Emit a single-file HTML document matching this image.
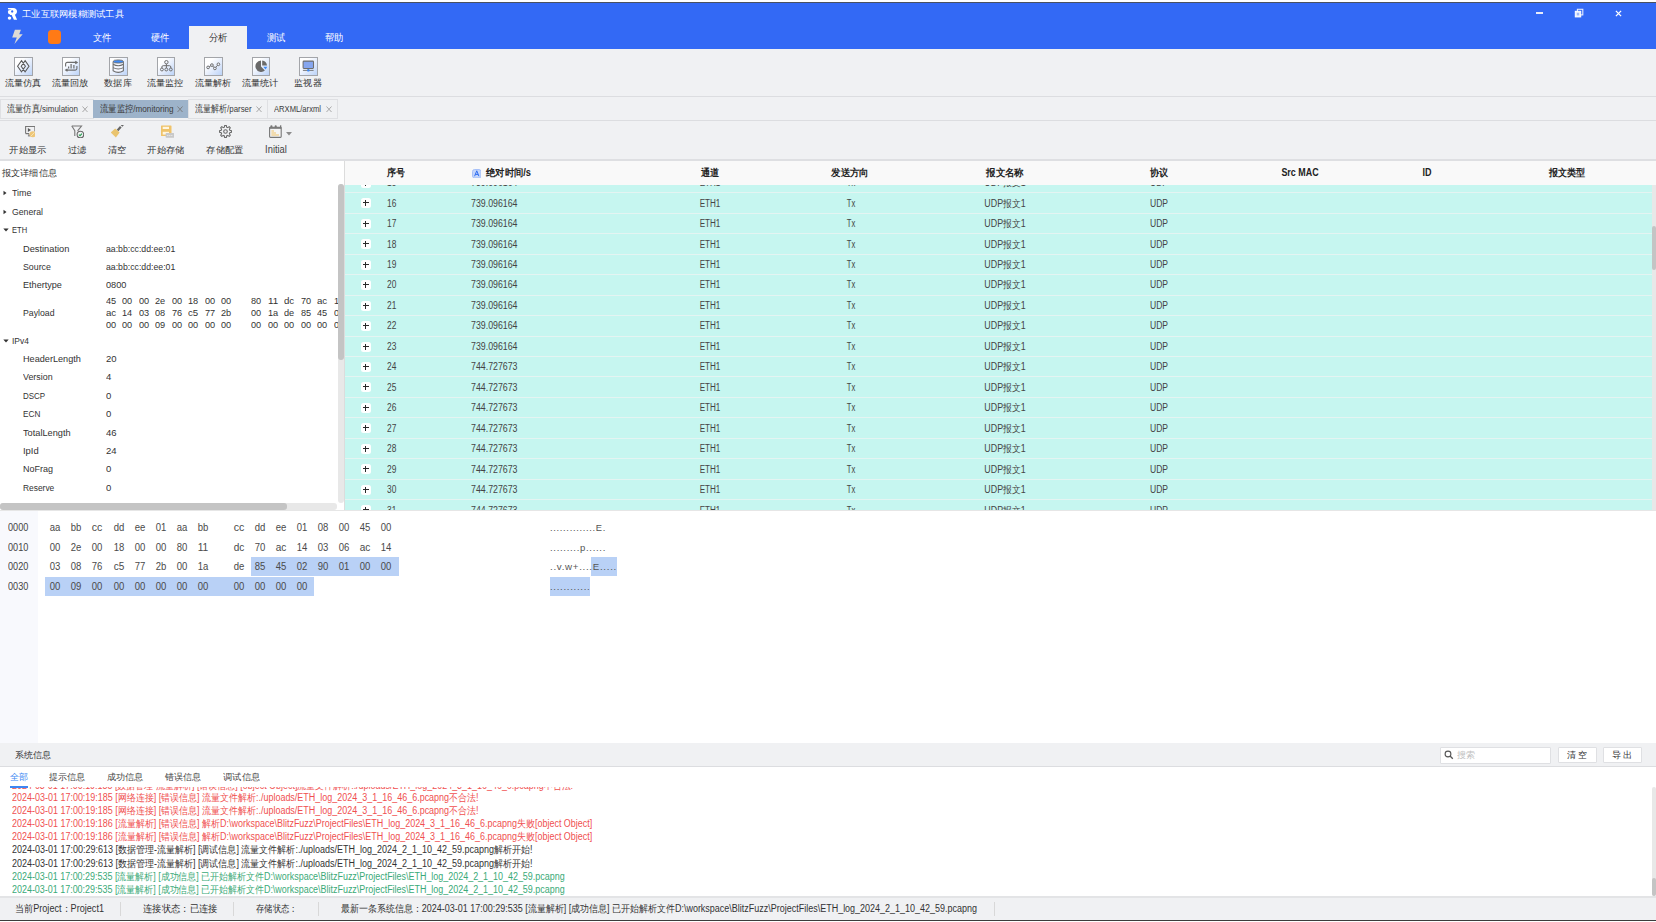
<!DOCTYPE html>
<html><head><meta charset="utf-8">
<style>
*{box-sizing:border-box;margin:0;padding:0}
html,body{width:1656px;height:922px;overflow:hidden;background:#fff;font-family:"Liberation Sans",sans-serif;font-size:9px;color:#333}
.a{position:absolute}
.t{position:absolute;white-space:nowrap}
.c{transform:translateX(-50%)}
</style></head><body>

<div class="a" style="left:0px;top:2px;width:1656px;height:1px;background:#4a5160;"></div>
<div class="a" style="left:0px;top:3px;width:1656px;height:46px;background:#3369f5;"></div>
<svg class="a" style="left:0px;top:0px" width="24" height="24" viewBox="0 0 24 24"><path d="M7.8 7.9 H13.2 C15.6 7.9 17 9.4 17 11.4 C17 13 16.1 14.2 14.9 14.7 L17.1 19.8 H13.9 L11.6 15.1 H10.2 Z" fill="#fff"/><circle cx="10.2" cy="12.1" r="2.35" fill="#fff"/><ellipse cx="12.2" cy="11.4" rx="1.05" ry="1.2" fill="#3369f5"/><path d="M7.8 9.4 H11.6 L8.4 10.6 Z" fill="#3369f5"/><ellipse cx="9.5" cy="18.1" rx="1.75" ry="1.7" fill="#fff"/></svg>
<div class="t" style="left:22px;top:8.00px;font-size:9.3px;line-height:12px;color:#fff;transform:scaleX(1.0303);transform-origin:0 50%;">工业互联网模糊测试工具</div>
<div class="a" style="left:1536px;top:12.2px;width:6.5px;height:1.6px;background:#e8ecfb;"></div>
<svg class="a" style="left:1574px;top:8px" width="10" height="10" viewBox="0 0 10 10"><rect x="3.4" y="1.3" width="5.4" height="5.6" fill="none" stroke="#e6ecfc" stroke-width="1.1"/><rect x="1.3" y="3.3" width="5.4" height="5.6" fill="#eef2fd" stroke="#ffffff" stroke-width="1"/><rect x="2.8" y="4.8" width="2.4" height="2.6" fill="#9fb8f8"/></svg>
<svg class="a" style="left:1615px;top:9.5px" width="7" height="7" viewBox="0 0 7 7"><path d="M0.9 0.9 L6.1 6.1 M6.1 0.9 L0.9 6.1" stroke="#fff" stroke-width="1.3"/></svg>
<svg class="a" style="left:0px;top:0px" width="30" height="50" viewBox="0 0 30 50"><path d="M14.9 29.8 H20.9 L19.2 34.3 H22.7 L14.4 43.9 L16.8 37.6 H12.2 Z" fill="#dedbd5"/></svg>
<div class="a" style="left:47.8px;top:30px;width:13.3px;height:13.8px;background:#ff7a16;border-radius:3.5px"></div>
<div class="a" style="left:189px;top:26px;width:58px;height:23px;background:#f0f1f3;"></div>
<div class="t c" style="left:102px;top:32.00px;font-size:9.5px;line-height:12px;color:#fff;transform:translateX(-50%) scaleX(0.9300);transform-origin:50% 50%;">文件</div>
<div class="t c" style="left:160px;top:32.00px;font-size:9.5px;line-height:12px;color:#fff;transform:translateX(-50%) scaleX(0.9300);transform-origin:50% 50%;">硬件</div>
<div class="t c" style="left:218px;top:32.00px;font-size:9.5px;line-height:12px;color:#333;transform:translateX(-50%) scaleX(0.9300);transform-origin:50% 50%;">分析</div>
<div class="t c" style="left:276px;top:32.00px;font-size:9.5px;line-height:12px;color:#fff;transform:translateX(-50%) scaleX(0.9300);transform-origin:50% 50%;">测试</div>
<div class="t c" style="left:334px;top:32.00px;font-size:9.5px;line-height:12px;color:#fff;transform:translateX(-50%) scaleX(0.9300);transform-origin:50% 50%;">帮助</div>
<div class="a" style="left:0px;top:49px;width:1656px;height:111px;background:#f0f1f3;"></div>
<div class="a" style="left:0px;top:96px;width:1656px;height:1px;background:#dcdde0;"></div>
<div class="a" style="left:0px;top:120px;width:1656px;height:1px;background:#dcdde0;"></div>
<div class="a" style="left:0px;top:159.3px;width:1656px;height:1.6px;background:#dedfe2;"></div>
<div class="a" style="left:14.1px;top:57.1px;width:18.6px;height:18.6px;border:1px solid #a3a5a9;background:linear-gradient(135deg,#ffffff 25%,#e6eefc 55%,#bcd3f8)"></div>
<svg class="a" style="left:14.1px;top:57.1px" width="18.5" height="18.5" viewBox="0 0 18.5 18.5"><path d="M7.5 3.6 L11.4 9.25 L7.5 14.9 L3.6 9.25Z M11.1 3.6 L15 9.25 L11.1 14.9 L7.2 9.25Z" fill="none" stroke="#5a5a5a" stroke-width="1.05" stroke-linejoin="miter"/></svg>
<div class="t c" style="left:22.65px;top:77.00px;font-size:9.3px;line-height:12px;color:#333;transform:translateX(-50%) scaleX(1.0194);transform-origin:50% 50%;">流量仿真</div>
<div class="a" style="left:61.6px;top:57.1px;width:18.6px;height:18.6px;border:1px solid #a3a5a9;background:linear-gradient(135deg,#ffffff 25%,#e6eefc 55%,#bcd3f8)"></div>
<svg class="a" style="left:61.6px;top:57.1px" width="18.5" height="18.5" viewBox="0 0 18.5 18.5"><path d="M3.6 9.6 V7 Q3.6 5.4 5.2 5.4 H14.6 M13.3 4.2 L15.2 5.45 L13.3 6.7 M14.9 8.9 V11.5 Q14.9 13.1 13.3 13.1 H4.2 M5.5 11.9 L3.6 13.1 L5.5 14.3" fill="none" stroke="#6e6e6e" stroke-width="1.1"/><path d="M6.6 11.4 V9.4 M9.1 11.6 V6.9 M11.9 11.6 V7.9" stroke="#6e6e6e" stroke-width="1.2"/></svg>
<div class="t c" style="left:70.05px;top:77.00px;font-size:9.3px;line-height:12px;color:#333;transform:translateX(-50%) scaleX(1.0194);transform-origin:50% 50%;">流量回放</div>
<div class="a" style="left:109.1px;top:57.1px;width:18.6px;height:18.6px;border:1px solid #a3a5a9;background:linear-gradient(135deg,#ffffff 25%,#e6eefc 55%,#bcd3f8)"></div>
<svg class="a" style="left:109.1px;top:57.1px" width="18.5" height="18.5" viewBox="0 0 18.5 18.5"><path d="M4.1 4.5 V13.8 Q9.25 17 14.4 13.8 V4.5" fill="#f4f7ff" stroke="#6e6e6e" stroke-width="1.05"/><path d="M4.1 7.3 Q9.25 10.3 14.4 7.3 M4.1 10.6 Q9.25 13.4 14.4 10.6" fill="none" stroke="#6e6e6e" stroke-width="1.05"/><ellipse cx="9.25" cy="4.5" rx="5.15" ry="1.6" fill="#3d8af7" stroke="#6e6e6e" stroke-width="0.9"/></svg>
<div class="t c" style="left:117.65px;top:77.00px;font-size:9.3px;line-height:12px;color:#333;transform:translateX(-50%) scaleX(1.0185);transform-origin:50% 50%;">数据库</div>
<div class="a" style="left:156.5px;top:57.1px;width:18.6px;height:18.6px;border:1px solid #a3a5a9;background:linear-gradient(135deg,#ffffff 25%,#e6eefc 55%,#bcd3f8)"></div>
<svg class="a" style="left:156.5px;top:57.1px" width="18.5" height="18.5" viewBox="0 0 18.5 18.5"><circle cx="9.4" cy="5.2" r="1.7" fill="none" stroke="#6e6e6e" stroke-width="1"/><path d="M9.4 6.9 V11 M4.9 11 V10 Q4.9 8.7 6.2 8.7 H12.5 Q13.8 8.7 13.8 10 V11" fill="none" stroke="#6e6e6e" stroke-width="1"/><circle cx="4.9" cy="12.5" r="1.45" fill="none" stroke="#6e6e6e" stroke-width="1"/><circle cx="9.3" cy="12.5" r="1.45" fill="none" stroke="#6e6e6e" stroke-width="1"/><circle cx="13.8" cy="12.5" r="1.45" fill="none" stroke="#6e6e6e" stroke-width="1"/></svg>
<div class="t c" style="left:165.25px;top:77.00px;font-size:9.3px;line-height:12px;color:#333;transform:translateX(-50%) scaleX(1.0194);transform-origin:50% 50%;">流量监控</div>
<div class="a" style="left:204.1px;top:57.1px;width:18.6px;height:18.6px;border:1px solid #a3a5a9;background:linear-gradient(135deg,#ffffff 25%,#e6eefc 55%,#bcd3f8)"></div>
<svg class="a" style="left:204.1px;top:57.1px" width="18.5" height="18.5" viewBox="0 0 18.5 18.5"><path d="M4.1 10.4 L7.9 8.1 L10.9 11.4 L14.4 7.3" fill="none" stroke="#6e6e6e" stroke-width="0.9"/><circle cx="4.1" cy="10.4" r="1.35" fill="#f0f4fe" stroke="#6e6e6e" stroke-width="1"/><circle cx="7.9" cy="8.1" r="1.35" fill="#f0f4fe" stroke="#6e6e6e" stroke-width="1"/><circle cx="10.9" cy="11.4" r="1.35" fill="#f0f4fe" stroke="#6e6e6e" stroke-width="1"/><circle cx="14.4" cy="7.3" r="1.35" fill="#f0f4fe" stroke="#6e6e6e" stroke-width="1"/></svg>
<div class="t c" style="left:212.85px;top:77.00px;font-size:9.3px;line-height:12px;color:#333;transform:translateX(-50%) scaleX(1.0194);transform-origin:50% 50%;">流量解析</div>
<div class="a" style="left:251.5px;top:57.1px;width:18.6px;height:18.6px;border:1px solid #a3a5a9;background:linear-gradient(135deg,#ffffff 25%,#e6eefc 55%,#bcd3f8)"></div>
<svg class="a" style="left:251.5px;top:57.1px" width="18.5" height="18.5" viewBox="0 0 18.5 18.5"><path d="M9 3.45 A5.75 5.75 0 1 0 12.9 13.6 L9 9.5 Z" fill="#6a6a6a"/><path d="M10.2 3.5 A5.75 5.75 0 0 1 15 8.4 H10.2 Z" fill="#6a6a6a"/><path d="M11.3 9.7 H15.3 L13.6 12.6 Z" fill="#3d8af7"/></svg>
<div class="t c" style="left:260.35px;top:77.00px;font-size:9.3px;line-height:12px;color:#333;transform:translateX(-50%) scaleX(1.0250);transform-origin:50% 50%;">流量统计</div>
<div class="a" style="left:299.1px;top:57.1px;width:18.6px;height:18.6px;border:1px solid #a3a5a9;background:linear-gradient(135deg,#ffffff 25%,#e6eefc 55%,#bcd3f8)"></div>
<svg class="a" style="left:299.1px;top:57.1px" width="18.5" height="18.5" viewBox="0 0 18.5 18.5"><rect x="4.1" y="4.1" width="10.4" height="7.3" rx="0.8" fill="#86a6ef" stroke="#6e6e6e" stroke-width="1.05"/><path d="M9.3 11.4 V13 M3.9 13.4 H14.6" stroke="#6e6e6e" stroke-width="0.9"/><rect x="8.1" y="12.3" width="2.5" height="2.1" rx="0.6" fill="#3d8af7"/></svg>
<div class="t c" style="left:307.65px;top:77.00px;font-size:9.3px;line-height:12px;color:#333;transform:translateX(-50%) scaleX(1.0111);transform-origin:50% 50%;">监视器</div>
<div class="a" style="left:0px;top:99px;width:94px;height:20px;border:1px solid #dfe0e3;background:#f0f1f3"></div>
<div class="t" style="left:6.5px;top:103.30px;font-size:9.8px;line-height:12px;color:#3c3c3c;transform:scaleX(0.8177);transform-origin:0 50%;">流量仿真/simulation</div>
<svg class="a" style="left:82px;top:105.5px" width="6" height="6.5" viewBox="0 0 6 6.5"><path d="M0.5 0.5 L5.5 6 M5.5 0.5 L0.5 6" stroke="#a0a0a0" stroke-width="0.9"/></svg>
<div class="a" style="left:93px;top:100px;width:95px;height:18px;background:#9db3ca;"></div>
<div class="t" style="left:99.5px;top:103.30px;font-size:9.8px;line-height:12px;color:#3c3c3c;transform:scaleX(0.8319);transform-origin:0 50%;">流量监控/monitoring</div>
<svg class="a" style="left:177px;top:105.5px" width="6" height="6.5" viewBox="0 0 6 6.5"><path d="M0.5 0.5 L5.5 6 M5.5 0.5 L0.5 6" stroke="#777" stroke-width="0.9"/></svg>
<div class="a" style="left:188px;top:99px;width:80px;height:20px;border:1px solid #dfe0e3;background:#f0f1f3"></div>
<div class="t" style="left:194.5px;top:103.30px;font-size:9.8px;line-height:12px;color:#3c3c3c;transform:scaleX(0.8028);transform-origin:0 50%;">流量解析/parser</div>
<svg class="a" style="left:256px;top:105.5px" width="6" height="6.5" viewBox="0 0 6 6.5"><path d="M0.5 0.5 L5.5 6 M5.5 0.5 L0.5 6" stroke="#a0a0a0" stroke-width="0.9"/></svg>
<div class="a" style="left:267px;top:99px;width:71px;height:20px;border:1px solid #dfe0e3;background:#f0f1f3"></div>
<div class="t" style="left:273.5px;top:103.30px;font-size:9.8px;line-height:12px;color:#3c3c3c;transform:scaleX(0.7777);transform-origin:0 50%;">ARXML/arxml</div>
<svg class="a" style="left:326px;top:105.5px" width="6" height="6.5" viewBox="0 0 6 6.5"><path d="M0.5 0.5 L5.5 6 M5.5 0.5 L0.5 6" stroke="#a0a0a0" stroke-width="0.9"/></svg>
<svg class="a" style="left:21.5px;top:124.8px" width="13" height="13" viewBox="0 0 13 13"><path d="M3.6 8.5 V1.5 H12.9 V6.5 M7 8.6 H3.6" fill="none" stroke="#777" stroke-width="1.1"/><path d="M5.9 3.1 L9 5 L5.9 6.9Z" fill="#5a5a5a"/><path d="M5.9 10.9 H8.4 M7 8.6 V10.9" stroke="#777" stroke-width="1"/><ellipse cx="10.9" cy="9.2" rx="3.4" ry="3" fill="#eec676"/><path d="M9 11 L12.6 7.3" stroke="#f6e6c0" stroke-width="0.9"/></svg>
<div class="t c" style="left:28.05px;top:143.80px;font-size:9.2px;line-height:12px;color:#333;transform:translateX(-50%) scaleX(1.0306);transform-origin:50% 50%;">开始显示</div>
<svg class="a" style="left:70.5px;top:124.8px" width="13" height="13" viewBox="0 0 13 13"><path d="M0.8 1 H10.5 L6.6 5.8" fill="none" stroke="#777" stroke-width="1.1"/><path d="M0.8 1 L3.8 5.6 V11" fill="none" stroke="#777" stroke-width="1.1"/><circle cx="9.4" cy="9.6" r="3.3" fill="#f0f1f3" stroke="#666" stroke-width="1.1"/><path d="M7.9 9.6 L9.1 10.7 L11 8.6" fill="none" stroke="#27a050" stroke-width="1.1"/></svg>
<div class="t c" style="left:77.25px;top:143.80px;font-size:9.2px;line-height:12px;color:#333;transform:translateX(-50%) scaleX(1.0278);transform-origin:50% 50%;">过滤</div>
<svg class="a" style="left:111.0px;top:124.8px" width="13" height="13" viewBox="0 0 13 13"><path d="M6.5 5.5 L9.8 1.8 M10.6 1 L12 -0.5" stroke="#666" stroke-width="2.2"/><path d="M-0.3 7.4 L4.2 3.4 L8.6 7.6 L4.9 12.6 Z" fill="#eac46e"/></svg>
<div class="t c" style="left:117.2px;top:143.80px;font-size:9.2px;line-height:12px;color:#333;transform:translateX(-50%) scaleX(1.0222);transform-origin:50% 50%;">清空</div>
<svg class="a" style="left:160.5px;top:124.8px" width="13" height="13" viewBox="0 0 13 13"><rect x="0" y="0.5" width="10.5" height="10.6" rx="0.6" fill="#efc36a"/><rect x="1.7" y="1.8" width="6.3" height="2.2" fill="#fff6e0"/><rect x="1.7" y="6.8" width="6.3" height="2.8" fill="#fff6e0"/><rect x="4.6" y="8.1" width="8.9" height="4.7" rx="0.8" fill="#c8c8c8"/><path d="M6.2 10.5 H12" stroke="#e8e8e8" stroke-width="1" stroke-dasharray="1.2 0.8"/></svg>
<div class="t c" style="left:166.35px;top:143.80px;font-size:9.2px;line-height:12px;color:#333;transform:translateX(-50%) scaleX(1.0361);transform-origin:50% 50%;">开始存储</div>
<svg class="a" style="left:218.5px;top:124.8px" width="13" height="13" viewBox="0 0 13 13"><path d="M12.55 5.69 L12.55 7.31 L10.85 7.65 L10.39 8.76 L11.35 10.20 L10.20 11.35 L8.76 10.39 L7.65 10.85 L7.31 12.55 L5.69 12.55 L5.35 10.85 L4.24 10.39 L2.80 11.35 L1.65 10.20 L2.61 8.76 L2.15 7.65 L0.45 7.31 L0.45 5.69 L2.15 5.35 L2.61 4.24 L1.65 2.80 L2.80 1.65 L4.24 2.61 L5.35 2.15 L5.69 0.45 L7.31 0.45 L7.65 2.15 L8.76 2.61 L10.20 1.65 L11.35 2.80 L10.39 4.24 L10.85 5.35Z" fill="none" stroke="#6a6a6a" stroke-width="1.1" stroke-linejoin="round"/><circle cx="6.5" cy="6.5" r="1.8" fill="none" stroke="#6a6a6a" stroke-width="1.1"/></svg>
<div class="t c" style="left:224.5px;top:143.80px;font-size:9.2px;line-height:12px;color:#333;transform:translateX(-50%) scaleX(1.0278);transform-origin:50% 50%;">存储配置</div>
<svg class="a" style="left:269px;top:125px" width="13" height="13" viewBox="0 0 13 13"><rect x="0.6" y="2.2" width="11.6" height="10.2" rx="0.8" fill="#f4f4f4" stroke="#777" stroke-width="1.1"/><rect x="0.6" y="2.2" width="11.6" height="1.6" fill="#777"/><circle cx="2.4" cy="1.4" r="1.1" fill="#777"/><circle cx="6.7" cy="1.4" r="1.1" fill="#777"/><rect x="11" y="0.3" width="1.3" height="3" fill="#777"/><path d="M2.4 6 H5 M2.4 8 H7 M2.4 10 H10" stroke="#efc36a" stroke-width="1.2"/></svg>
<svg class="a" style="left:285.5px;top:131.5px" width="6" height="4" viewBox="0 0 6 4"><path d="M0 0 H6 L3 3.6 Z" fill="#8c8c8c"/></svg>
<div class="t c" style="left:275.5px;top:143.80px;font-size:10px;line-height:12px;color:#444;transform:translateX(-50%) scaleX(0.9332);transform-origin:50% 50%;">Initial</div>
<div class="a" style="left:0px;top:161px;width:344px;height:349px;background:#fff;"></div>
<div class="t" style="left:1.6px;top:166.50px;font-size:9.2px;line-height:12px;color:#333;transform:scaleX(1.0148);transform-origin:0 50%;">报文详细信息</div>
<svg class="a" style="left:3px;top:190.4px" width="4" height="6" viewBox="0 0 4 6"><path d="M0.5 0.8 L3.5 3 L0.5 5.2Z" fill="#333"/></svg>
<div class="t" style="left:12px;top:187.40px;font-size:9.6px;line-height:12px;color:#333;transform:scaleX(0.9300);transform-origin:0 50%;">Time</div>
<svg class="a" style="left:3px;top:208.8px" width="4" height="6" viewBox="0 0 4 6"><path d="M0.5 0.8 L3.5 3 L0.5 5.2Z" fill="#333"/></svg>
<div class="t" style="left:12px;top:205.80px;font-size:9.6px;line-height:12px;color:#333;transform:scaleX(0.9051);transform-origin:0 50%;">General</div>
<svg class="a" style="left:2.5px;top:228.2px" width="6" height="4" viewBox="0 0 6 4"><path d="M0.3 0.5 L5.7 0.5 L3 3.5Z" fill="#333"/></svg>
<div class="t" style="left:12px;top:224.20px;font-size:9.6px;line-height:12px;color:#333;transform:scaleX(0.7870);transform-origin:0 50%;">ETH</div>
<div class="t" style="left:22.8px;top:242.60px;font-size:9.6px;line-height:12px;color:#333;transform:scaleX(0.9646);transform-origin:0 50%;">Destination</div>
<div class="t" style="left:105.7px;top:242.60px;font-size:9.6px;line-height:12px;color:#333;transform:scaleX(0.9085);transform-origin:0 50%;">aa:bb:cc:dd:ee:01</div>
<div class="t" style="left:22.8px;top:261.00px;font-size:9.6px;line-height:12px;color:#333;transform:scaleX(0.9176);transform-origin:0 50%;">Source</div>
<div class="t" style="left:105.7px;top:261.00px;font-size:9.6px;line-height:12px;color:#333;transform:scaleX(0.9085);transform-origin:0 50%;">aa:bb:cc:dd:ee:01</div>
<div class="t" style="left:22.8px;top:279.40px;font-size:9.6px;line-height:12px;color:#333;transform:scaleX(0.9470);transform-origin:0 50%;">Ethertype</div>
<div class="t" style="left:105.7px;top:279.40px;font-size:9.6px;line-height:12px;color:#333;transform:scaleX(0.9605);transform-origin:0 50%;">0800</div>
<div class="t" style="left:22.8px;top:307.00px;font-size:9.6px;line-height:12px;color:#333;transform:scaleX(0.9085);transform-origin:0 50%;">Payload</div>
<div class="t" style="left:105.7px;top:295.30px;font-size:9.6px;line-height:12px;color:#333;transform:scaleX(0.9558);transform-origin:0 50%;">45</div>
<div class="t" style="left:122.24000000000001px;top:295.30px;font-size:9.6px;line-height:12px;color:#333;transform:scaleX(0.9558);transform-origin:0 50%;">00</div>
<div class="t" style="left:138.78px;top:295.30px;font-size:9.6px;line-height:12px;color:#333;transform:scaleX(0.9558);transform-origin:0 50%;">00</div>
<div class="t" style="left:155.32px;top:295.30px;font-size:9.6px;line-height:12px;color:#333;transform:scaleX(0.9558);transform-origin:0 50%;">2e</div>
<div class="t" style="left:171.86px;top:295.30px;font-size:9.6px;line-height:12px;color:#333;transform:scaleX(0.9558);transform-origin:0 50%;">00</div>
<div class="t" style="left:188.39999999999998px;top:295.30px;font-size:9.6px;line-height:12px;color:#333;transform:scaleX(0.9558);transform-origin:0 50%;">18</div>
<div class="t" style="left:204.94px;top:295.30px;font-size:9.6px;line-height:12px;color:#333;transform:scaleX(0.9558);transform-origin:0 50%;">00</div>
<div class="t" style="left:221.48000000000002px;top:295.30px;font-size:9.6px;line-height:12px;color:#333;transform:scaleX(0.9558);transform-origin:0 50%;">00</div>
<div class="t" style="left:251.1px;top:295.30px;font-size:9.6px;line-height:12px;color:#333;transform:scaleX(0.9558);transform-origin:0 50%;">80</div>
<div class="t" style="left:267.64px;top:295.30px;font-size:9.6px;line-height:12px;color:#333;transform:scaleX(1.0232);transform-origin:0 50%;">11</div>
<div class="t" style="left:284.18px;top:295.30px;font-size:9.6px;line-height:12px;color:#333;transform:scaleX(1.0059);transform-origin:0 50%;">dc</div>
<div class="t" style="left:300.71999999999997px;top:295.30px;font-size:9.6px;line-height:12px;color:#333;transform:scaleX(0.9558);transform-origin:0 50%;">70</div>
<div class="t" style="left:317.26px;top:295.30px;font-size:9.6px;line-height:12px;color:#333;transform:scaleX(1.0059);transform-origin:0 50%;">ac</div>
<div class="t" style="left:333.79999999999995px;top:295.30px;font-size:9.6px;line-height:12px;color:#333;transform:scaleX(0.9558);transform-origin:0 50%;">14</div>
<div class="t" style="left:105.7px;top:307.00px;font-size:9.6px;line-height:12px;color:#333;transform:scaleX(1.0059);transform-origin:0 50%;">ac</div>
<div class="t" style="left:122.24000000000001px;top:307.00px;font-size:9.6px;line-height:12px;color:#333;transform:scaleX(0.9558);transform-origin:0 50%;">14</div>
<div class="t" style="left:138.78px;top:307.00px;font-size:9.6px;line-height:12px;color:#333;transform:scaleX(0.9558);transform-origin:0 50%;">03</div>
<div class="t" style="left:155.32px;top:307.00px;font-size:9.6px;line-height:12px;color:#333;transform:scaleX(0.9558);transform-origin:0 50%;">08</div>
<div class="t" style="left:171.86px;top:307.00px;font-size:9.6px;line-height:12px;color:#333;transform:scaleX(0.9558);transform-origin:0 50%;">76</div>
<div class="t" style="left:188.39999999999998px;top:307.00px;font-size:9.6px;line-height:12px;color:#333;transform:scaleX(1.0059);transform-origin:0 50%;">c5</div>
<div class="t" style="left:204.94px;top:307.00px;font-size:9.6px;line-height:12px;color:#333;transform:scaleX(0.9558);transform-origin:0 50%;">77</div>
<div class="t" style="left:221.48000000000002px;top:307.00px;font-size:9.6px;line-height:12px;color:#333;transform:scaleX(0.9558);transform-origin:0 50%;">2b</div>
<div class="t" style="left:251.1px;top:307.00px;font-size:9.6px;line-height:12px;color:#333;transform:scaleX(0.9558);transform-origin:0 50%;">00</div>
<div class="t" style="left:267.64px;top:307.00px;font-size:9.6px;line-height:12px;color:#333;transform:scaleX(0.9558);transform-origin:0 50%;">1a</div>
<div class="t" style="left:284.18px;top:307.00px;font-size:9.6px;line-height:12px;color:#333;transform:scaleX(0.9558);transform-origin:0 50%;">de</div>
<div class="t" style="left:300.71999999999997px;top:307.00px;font-size:9.6px;line-height:12px;color:#333;transform:scaleX(0.9558);transform-origin:0 50%;">85</div>
<div class="t" style="left:317.26px;top:307.00px;font-size:9.6px;line-height:12px;color:#333;transform:scaleX(0.9558);transform-origin:0 50%;">45</div>
<div class="t" style="left:333.79999999999995px;top:307.00px;font-size:9.6px;line-height:12px;color:#333;transform:scaleX(0.9558);transform-origin:0 50%;">02</div>
<div class="t" style="left:105.7px;top:318.70px;font-size:9.6px;line-height:12px;color:#333;transform:scaleX(0.9558);transform-origin:0 50%;">00</div>
<div class="t" style="left:122.24000000000001px;top:318.70px;font-size:9.6px;line-height:12px;color:#333;transform:scaleX(0.9558);transform-origin:0 50%;">00</div>
<div class="t" style="left:138.78px;top:318.70px;font-size:9.6px;line-height:12px;color:#333;transform:scaleX(0.9558);transform-origin:0 50%;">00</div>
<div class="t" style="left:155.32px;top:318.70px;font-size:9.6px;line-height:12px;color:#333;transform:scaleX(0.9558);transform-origin:0 50%;">09</div>
<div class="t" style="left:171.86px;top:318.70px;font-size:9.6px;line-height:12px;color:#333;transform:scaleX(0.9558);transform-origin:0 50%;">00</div>
<div class="t" style="left:188.39999999999998px;top:318.70px;font-size:9.6px;line-height:12px;color:#333;transform:scaleX(0.9558);transform-origin:0 50%;">00</div>
<div class="t" style="left:204.94px;top:318.70px;font-size:9.6px;line-height:12px;color:#333;transform:scaleX(0.9558);transform-origin:0 50%;">00</div>
<div class="t" style="left:221.48000000000002px;top:318.70px;font-size:9.6px;line-height:12px;color:#333;transform:scaleX(0.9558);transform-origin:0 50%;">00</div>
<div class="t" style="left:251.1px;top:318.70px;font-size:9.6px;line-height:12px;color:#333;transform:scaleX(0.9558);transform-origin:0 50%;">00</div>
<div class="t" style="left:267.64px;top:318.70px;font-size:9.6px;line-height:12px;color:#333;transform:scaleX(0.9558);transform-origin:0 50%;">00</div>
<div class="t" style="left:284.18px;top:318.70px;font-size:9.6px;line-height:12px;color:#333;transform:scaleX(0.9558);transform-origin:0 50%;">00</div>
<div class="t" style="left:300.71999999999997px;top:318.70px;font-size:9.6px;line-height:12px;color:#333;transform:scaleX(0.9558);transform-origin:0 50%;">00</div>
<div class="t" style="left:317.26px;top:318.70px;font-size:9.6px;line-height:12px;color:#333;transform:scaleX(0.9558);transform-origin:0 50%;">00</div>
<div class="t" style="left:333.79999999999995px;top:318.70px;font-size:9.6px;line-height:12px;color:#333;transform:scaleX(0.9558);transform-origin:0 50%;">00</div>
<svg class="a" style="left:2.5px;top:338.5px" width="6" height="4" viewBox="0 0 6 4"><path d="M0.3 0.5 L5.7 0.5 L3 3.5Z" fill="#333"/></svg>
<div class="t" style="left:11.6px;top:334.50px;font-size:9.6px;line-height:12px;color:#333;transform:scaleX(0.8801);transform-origin:0 50%;">IPv4</div>
<div class="t" style="left:22.8px;top:352.90px;font-size:9.6px;line-height:12px;color:#333;transform:scaleX(0.9521);transform-origin:0 50%;">HeaderLength</div>
<div class="t" style="left:105.7px;top:352.90px;font-size:9.6px;line-height:12px;color:#333;transform:scaleX(0.9933);transform-origin:0 50%;">20</div>
<div class="t" style="left:22.8px;top:371.30px;font-size:9.6px;line-height:12px;color:#333;transform:scaleX(0.9250);transform-origin:0 50%;">Version</div>
<div class="t" style="left:105.7px;top:371.30px;font-size:9.6px;line-height:12px;color:#333;transform:scaleX(0.9918);transform-origin:0 50%;">4</div>
<div class="t" style="left:22.8px;top:389.70px;font-size:9.6px;line-height:12px;color:#333;transform:scaleX(0.8328);transform-origin:0 50%;">DSCP</div>
<div class="t" style="left:105.7px;top:389.70px;font-size:9.6px;line-height:12px;color:#333;transform:scaleX(0.9918);transform-origin:0 50%;">0</div>
<div class="t" style="left:22.8px;top:408.10px;font-size:9.6px;line-height:12px;color:#333;transform:scaleX(0.8537);transform-origin:0 50%;">ECN</div>
<div class="t" style="left:105.7px;top:408.10px;font-size:9.6px;line-height:12px;color:#333;transform:scaleX(0.9918);transform-origin:0 50%;">0</div>
<div class="t" style="left:22.8px;top:426.50px;font-size:9.6px;line-height:12px;color:#333;transform:scaleX(0.9595);transform-origin:0 50%;">TotalLength</div>
<div class="t" style="left:105.7px;top:426.50px;font-size:9.6px;line-height:12px;color:#333;transform:scaleX(0.9933);transform-origin:0 50%;">46</div>
<div class="t" style="left:22.8px;top:444.90px;font-size:9.6px;line-height:12px;color:#333;transform:scaleX(0.9803);transform-origin:0 50%;">IpId</div>
<div class="t" style="left:105.7px;top:444.90px;font-size:9.6px;line-height:12px;color:#333;transform:scaleX(0.9933);transform-origin:0 50%;">24</div>
<div class="t" style="left:22.8px;top:463.30px;font-size:9.6px;line-height:12px;color:#333;transform:scaleX(0.9375);transform-origin:0 50%;">NoFrag</div>
<div class="t" style="left:105.7px;top:463.30px;font-size:9.6px;line-height:12px;color:#333;transform:scaleX(0.9918);transform-origin:0 50%;">0</div>
<div class="t" style="left:22.8px;top:481.70px;font-size:9.6px;line-height:12px;color:#333;transform:scaleX(0.8759);transform-origin:0 50%;">Reserve</div>
<div class="t" style="left:105.7px;top:481.70px;font-size:9.6px;line-height:12px;color:#333;transform:scaleX(0.9918);transform-origin:0 50%;">0</div>
<div class="a" style="left:338px;top:161px;width:6px;height:349px;background:#fff;"></div>
<div class="a" style="left:344px;top:161px;width:1px;height:349px;background:#dcdcdc;"></div>
<div class="a" style="left:338px;top:184px;width:6px;height:319px;background:#e8e8e8;border-radius:3px"></div>
<div class="a" style="left:338px;top:184px;width:6px;height:176px;background:#c4c4c4;border-radius:3px"></div>
<div class="a" style="left:0px;top:503px;width:337px;height:6.5px;background:#e8e8e8;border-radius:3px"></div>
<div class="a" style="left:0px;top:503px;width:287px;height:6.5px;background:#c4c4c4;border-radius:3px"></div>
<div class="a" style="left:345px;top:161px;width:1311px;height:24px;background:#f9f9f9;"></div>
<div class="t" style="left:387px;top:166.70px;font-size:10px;line-height:12px;color:#333;font-weight:bold;color:#222;transform:scaleX(0.9000);transform-origin:0 50%;">序号</div>
<svg class="a" style="left:471.5px;top:168.5px" width="9.5" height="9.5" viewBox="0 0 9.5 9.5"><rect x="0.5" y="0.5" width="8.5" height="8.5" rx="2" fill="#c4d6fb" stroke="#9ab8f8" stroke-width="0.8"/><path d="M2.6 7.2 L4.75 1.8 L6.9 7.2 M3.4 5.4 H6.1" fill="none" stroke="#2f6df0" stroke-width="1"/></svg>
<div class="t" style="left:485.8px;top:166.70px;font-size:10px;line-height:12px;color:#333;font-weight:bold;color:#222;transform:scaleX(0.9308);transform-origin:0 50%;">绝对时间/s</div>
<div class="t c" style="left:709.9px;top:166.70px;font-size:10px;line-height:12px;color:#333;font-weight:bold;color:#222;transform:translateX(-50%) scaleX(0.9150);transform-origin:50% 50%;">通道</div>
<div class="t c" style="left:850.4px;top:166.70px;font-size:10px;line-height:12px;color:#333;font-weight:bold;color:#222;transform:translateX(-50%) scaleX(0.9475);transform-origin:50% 50%;">发送方向</div>
<div class="t c" style="left:1005.2px;top:166.70px;font-size:10px;line-height:12px;color:#333;font-weight:bold;color:#222;transform:translateX(-50%) scaleX(0.9475);transform-origin:50% 50%;">报文名称</div>
<div class="t c" style="left:1159.2px;top:166.70px;font-size:10px;line-height:12px;color:#333;font-weight:bold;color:#222;transform:translateX(-50%) scaleX(0.9050);transform-origin:50% 50%;">协议</div>
<div class="t c" style="left:1300px;top:166.70px;font-size:10px;line-height:12px;color:#333;font-weight:bold;color:#222;transform:translateX(-50%) scaleX(0.8924);transform-origin:50% 50%;">Src MAC</div>
<div class="t c" style="left:1426.5px;top:166.70px;font-size:10px;line-height:12px;color:#333;font-weight:bold;color:#222;transform:translateX(-50%) scaleX(0.9000);transform-origin:50% 50%;">ID</div>
<div class="t c" style="left:1566.8px;top:166.70px;font-size:10px;line-height:12px;color:#333;font-weight:bold;color:#222;transform:translateX(-50%) scaleX(0.9075);transform-origin:50% 50%;">报文类型</div>
<div class="a" style="left:345px;top:185px;width:1307px;height:325px;overflow:hidden;background:#c6f6f0">
<div class="a" style="left:0;top:-13.16px;width:1307px;height:1px;background:#e4f4f2"></div>
<div class="a" style="left:16px;top:-7px;width:10px;height:10px;border-radius:2.5px;background:#fff"></div>
<svg class="a" style="left:16px;top:-7px" width="10" height="10"><path d="M4.5 1.6 V7.6 M1.6 4.5 H7.8" stroke="#2a2a2a" stroke-width="1" shape-rendering="crispEdges"/></svg>
<div class="t" style="left:42.39999999999998px;top:-7.86px;font-size:10px;line-height:12px;color:#444;transform:scaleX(0.8360);transform-origin:0 50%;">15</div>
<div class="t" style="left:126px;top:-7.86px;font-size:10px;line-height:12px;color:#444;transform:scaleX(0.8800);transform-origin:0 50%;">739.096164</div>
<div class="t c" style="left:364.85px;top:-7.86px;font-size:10px;line-height:12px;color:#444;transform:translateX(-50%) scaleX(0.8098);transform-origin:50% 50%;">ETH1</div>
<div class="t c" style="left:505.6px;top:-7.86px;font-size:10px;line-height:12px;color:#444;transform:translateX(-50%) scaleX(0.7651);transform-origin:50% 50%;">Tx</div>
<div class="t c" style="left:659.7px;top:-7.86px;font-size:10px;line-height:12px;color:#444;transform:translateX(-50%) scaleX(0.8846);transform-origin:50% 50%;">UDP报文1</div>
<div class="t c" style="left:814.2px;top:-7.86px;font-size:10px;line-height:12px;color:#444;transform:translateX(-50%) scaleX(0.8568);transform-origin:50% 50%;">UDP</div>
<div class="a" style="left:0;top:7.30px;width:1307px;height:1px;background:#e4f4f2"></div>
<div class="a" style="left:16px;top:13px;width:10px;height:10px;border-radius:2.5px;background:#fff"></div>
<svg class="a" style="left:16px;top:13px" width="10" height="10"><path d="M4.5 1.6 V7.6 M1.6 4.5 H7.8" stroke="#2a2a2a" stroke-width="1" shape-rendering="crispEdges"/></svg>
<div class="t" style="left:42.39999999999998px;top:12.60px;font-size:10px;line-height:12px;color:#444;transform:scaleX(0.8360);transform-origin:0 50%;">16</div>
<div class="t" style="left:126px;top:12.60px;font-size:10px;line-height:12px;color:#444;transform:scaleX(0.8800);transform-origin:0 50%;">739.096164</div>
<div class="t c" style="left:364.85px;top:12.60px;font-size:10px;line-height:12px;color:#444;transform:translateX(-50%) scaleX(0.8098);transform-origin:50% 50%;">ETH1</div>
<div class="t c" style="left:505.6px;top:12.60px;font-size:10px;line-height:12px;color:#444;transform:translateX(-50%) scaleX(0.7651);transform-origin:50% 50%;">Tx</div>
<div class="t c" style="left:659.7px;top:12.60px;font-size:10px;line-height:12px;color:#444;transform:translateX(-50%) scaleX(0.8846);transform-origin:50% 50%;">UDP报文1</div>
<div class="t c" style="left:814.2px;top:12.60px;font-size:10px;line-height:12px;color:#444;transform:translateX(-50%) scaleX(0.8568);transform-origin:50% 50%;">UDP</div>
<div class="a" style="left:0;top:27.76px;width:1307px;height:1px;background:#e4f4f2"></div>
<div class="a" style="left:16px;top:34px;width:10px;height:10px;border-radius:2.5px;background:#fff"></div>
<svg class="a" style="left:16px;top:34px" width="10" height="10"><path d="M4.5 1.6 V7.6 M1.6 4.5 H7.8" stroke="#2a2a2a" stroke-width="1" shape-rendering="crispEdges"/></svg>
<div class="t" style="left:42.39999999999998px;top:33.06px;font-size:10px;line-height:12px;color:#444;transform:scaleX(0.8360);transform-origin:0 50%;">17</div>
<div class="t" style="left:126px;top:33.06px;font-size:10px;line-height:12px;color:#444;transform:scaleX(0.8800);transform-origin:0 50%;">739.096164</div>
<div class="t c" style="left:364.85px;top:33.06px;font-size:10px;line-height:12px;color:#444;transform:translateX(-50%) scaleX(0.8098);transform-origin:50% 50%;">ETH1</div>
<div class="t c" style="left:505.6px;top:33.06px;font-size:10px;line-height:12px;color:#444;transform:translateX(-50%) scaleX(0.7651);transform-origin:50% 50%;">Tx</div>
<div class="t c" style="left:659.7px;top:33.06px;font-size:10px;line-height:12px;color:#444;transform:translateX(-50%) scaleX(0.8846);transform-origin:50% 50%;">UDP报文1</div>
<div class="t c" style="left:814.2px;top:33.06px;font-size:10px;line-height:12px;color:#444;transform:translateX(-50%) scaleX(0.8568);transform-origin:50% 50%;">UDP</div>
<div class="a" style="left:0;top:48.22px;width:1307px;height:1px;background:#e4f4f2"></div>
<div class="a" style="left:16px;top:54px;width:10px;height:10px;border-radius:2.5px;background:#fff"></div>
<svg class="a" style="left:16px;top:54px" width="10" height="10"><path d="M4.5 1.6 V7.6 M1.6 4.5 H7.8" stroke="#2a2a2a" stroke-width="1" shape-rendering="crispEdges"/></svg>
<div class="t" style="left:42.39999999999998px;top:53.52px;font-size:10px;line-height:12px;color:#444;transform:scaleX(0.8360);transform-origin:0 50%;">18</div>
<div class="t" style="left:126px;top:53.52px;font-size:10px;line-height:12px;color:#444;transform:scaleX(0.8800);transform-origin:0 50%;">739.096164</div>
<div class="t c" style="left:364.85px;top:53.52px;font-size:10px;line-height:12px;color:#444;transform:translateX(-50%) scaleX(0.8098);transform-origin:50% 50%;">ETH1</div>
<div class="t c" style="left:505.6px;top:53.52px;font-size:10px;line-height:12px;color:#444;transform:translateX(-50%) scaleX(0.7651);transform-origin:50% 50%;">Tx</div>
<div class="t c" style="left:659.7px;top:53.52px;font-size:10px;line-height:12px;color:#444;transform:translateX(-50%) scaleX(0.8846);transform-origin:50% 50%;">UDP报文1</div>
<div class="t c" style="left:814.2px;top:53.52px;font-size:10px;line-height:12px;color:#444;transform:translateX(-50%) scaleX(0.8568);transform-origin:50% 50%;">UDP</div>
<div class="a" style="left:0;top:68.68px;width:1307px;height:1px;background:#e4f4f2"></div>
<div class="a" style="left:16px;top:75px;width:10px;height:10px;border-radius:2.5px;background:#fff"></div>
<svg class="a" style="left:16px;top:75px" width="10" height="10"><path d="M4.5 1.6 V7.6 M1.6 4.5 H7.8" stroke="#2a2a2a" stroke-width="1" shape-rendering="crispEdges"/></svg>
<div class="t" style="left:42.39999999999998px;top:73.98px;font-size:10px;line-height:12px;color:#444;transform:scaleX(0.8360);transform-origin:0 50%;">19</div>
<div class="t" style="left:126px;top:73.98px;font-size:10px;line-height:12px;color:#444;transform:scaleX(0.8800);transform-origin:0 50%;">739.096164</div>
<div class="t c" style="left:364.85px;top:73.98px;font-size:10px;line-height:12px;color:#444;transform:translateX(-50%) scaleX(0.8098);transform-origin:50% 50%;">ETH1</div>
<div class="t c" style="left:505.6px;top:73.98px;font-size:10px;line-height:12px;color:#444;transform:translateX(-50%) scaleX(0.7651);transform-origin:50% 50%;">Tx</div>
<div class="t c" style="left:659.7px;top:73.98px;font-size:10px;line-height:12px;color:#444;transform:translateX(-50%) scaleX(0.8846);transform-origin:50% 50%;">UDP报文1</div>
<div class="t c" style="left:814.2px;top:73.98px;font-size:10px;line-height:12px;color:#444;transform:translateX(-50%) scaleX(0.8568);transform-origin:50% 50%;">UDP</div>
<div class="a" style="left:0;top:89.14px;width:1307px;height:1px;background:#e4f4f2"></div>
<div class="a" style="left:16px;top:95px;width:10px;height:10px;border-radius:2.5px;background:#fff"></div>
<svg class="a" style="left:16px;top:95px" width="10" height="10"><path d="M4.5 1.6 V7.6 M1.6 4.5 H7.8" stroke="#2a2a2a" stroke-width="1" shape-rendering="crispEdges"/></svg>
<div class="t" style="left:42.39999999999998px;top:94.44px;font-size:10px;line-height:12px;color:#444;transform:scaleX(0.8360);transform-origin:0 50%;">20</div>
<div class="t" style="left:126px;top:94.44px;font-size:10px;line-height:12px;color:#444;transform:scaleX(0.8800);transform-origin:0 50%;">739.096164</div>
<div class="t c" style="left:364.85px;top:94.44px;font-size:10px;line-height:12px;color:#444;transform:translateX(-50%) scaleX(0.8098);transform-origin:50% 50%;">ETH1</div>
<div class="t c" style="left:505.6px;top:94.44px;font-size:10px;line-height:12px;color:#444;transform:translateX(-50%) scaleX(0.7651);transform-origin:50% 50%;">Tx</div>
<div class="t c" style="left:659.7px;top:94.44px;font-size:10px;line-height:12px;color:#444;transform:translateX(-50%) scaleX(0.8846);transform-origin:50% 50%;">UDP报文1</div>
<div class="t c" style="left:814.2px;top:94.44px;font-size:10px;line-height:12px;color:#444;transform:translateX(-50%) scaleX(0.8568);transform-origin:50% 50%;">UDP</div>
<div class="a" style="left:0;top:109.60px;width:1307px;height:1px;background:#e4f4f2"></div>
<div class="a" style="left:16px;top:116px;width:10px;height:10px;border-radius:2.5px;background:#fff"></div>
<svg class="a" style="left:16px;top:116px" width="10" height="10"><path d="M4.5 1.6 V7.6 M1.6 4.5 H7.8" stroke="#2a2a2a" stroke-width="1" shape-rendering="crispEdges"/></svg>
<div class="t" style="left:42.39999999999998px;top:114.90px;font-size:10px;line-height:12px;color:#444;transform:scaleX(0.8360);transform-origin:0 50%;">21</div>
<div class="t" style="left:126px;top:114.90px;font-size:10px;line-height:12px;color:#444;transform:scaleX(0.8800);transform-origin:0 50%;">739.096164</div>
<div class="t c" style="left:364.85px;top:114.90px;font-size:10px;line-height:12px;color:#444;transform:translateX(-50%) scaleX(0.8098);transform-origin:50% 50%;">ETH1</div>
<div class="t c" style="left:505.6px;top:114.90px;font-size:10px;line-height:12px;color:#444;transform:translateX(-50%) scaleX(0.7651);transform-origin:50% 50%;">Tx</div>
<div class="t c" style="left:659.7px;top:114.90px;font-size:10px;line-height:12px;color:#444;transform:translateX(-50%) scaleX(0.8846);transform-origin:50% 50%;">UDP报文1</div>
<div class="t c" style="left:814.2px;top:114.90px;font-size:10px;line-height:12px;color:#444;transform:translateX(-50%) scaleX(0.8568);transform-origin:50% 50%;">UDP</div>
<div class="a" style="left:0;top:130.06px;width:1307px;height:1px;background:#e4f4f2"></div>
<div class="a" style="left:16px;top:136px;width:10px;height:10px;border-radius:2.5px;background:#fff"></div>
<svg class="a" style="left:16px;top:136px" width="10" height="10"><path d="M4.5 1.6 V7.6 M1.6 4.5 H7.8" stroke="#2a2a2a" stroke-width="1" shape-rendering="crispEdges"/></svg>
<div class="t" style="left:42.39999999999998px;top:135.36px;font-size:10px;line-height:12px;color:#444;transform:scaleX(0.8360);transform-origin:0 50%;">22</div>
<div class="t" style="left:126px;top:135.36px;font-size:10px;line-height:12px;color:#444;transform:scaleX(0.8800);transform-origin:0 50%;">739.096164</div>
<div class="t c" style="left:364.85px;top:135.36px;font-size:10px;line-height:12px;color:#444;transform:translateX(-50%) scaleX(0.8098);transform-origin:50% 50%;">ETH1</div>
<div class="t c" style="left:505.6px;top:135.36px;font-size:10px;line-height:12px;color:#444;transform:translateX(-50%) scaleX(0.7651);transform-origin:50% 50%;">Tx</div>
<div class="t c" style="left:659.7px;top:135.36px;font-size:10px;line-height:12px;color:#444;transform:translateX(-50%) scaleX(0.8846);transform-origin:50% 50%;">UDP报文1</div>
<div class="t c" style="left:814.2px;top:135.36px;font-size:10px;line-height:12px;color:#444;transform:translateX(-50%) scaleX(0.8568);transform-origin:50% 50%;">UDP</div>
<div class="a" style="left:0;top:150.52px;width:1307px;height:1px;background:#e4f4f2"></div>
<div class="a" style="left:16px;top:157px;width:10px;height:10px;border-radius:2.5px;background:#fff"></div>
<svg class="a" style="left:16px;top:157px" width="10" height="10"><path d="M4.5 1.6 V7.6 M1.6 4.5 H7.8" stroke="#2a2a2a" stroke-width="1" shape-rendering="crispEdges"/></svg>
<div class="t" style="left:42.39999999999998px;top:155.82px;font-size:10px;line-height:12px;color:#444;transform:scaleX(0.8360);transform-origin:0 50%;">23</div>
<div class="t" style="left:126px;top:155.82px;font-size:10px;line-height:12px;color:#444;transform:scaleX(0.8800);transform-origin:0 50%;">739.096164</div>
<div class="t c" style="left:364.85px;top:155.82px;font-size:10px;line-height:12px;color:#444;transform:translateX(-50%) scaleX(0.8098);transform-origin:50% 50%;">ETH1</div>
<div class="t c" style="left:505.6px;top:155.82px;font-size:10px;line-height:12px;color:#444;transform:translateX(-50%) scaleX(0.7651);transform-origin:50% 50%;">Tx</div>
<div class="t c" style="left:659.7px;top:155.82px;font-size:10px;line-height:12px;color:#444;transform:translateX(-50%) scaleX(0.8846);transform-origin:50% 50%;">UDP报文1</div>
<div class="t c" style="left:814.2px;top:155.82px;font-size:10px;line-height:12px;color:#444;transform:translateX(-50%) scaleX(0.8568);transform-origin:50% 50%;">UDP</div>
<div class="a" style="left:0;top:170.98px;width:1307px;height:1px;background:#e4f4f2"></div>
<div class="a" style="left:16px;top:177px;width:10px;height:10px;border-radius:2.5px;background:#fff"></div>
<svg class="a" style="left:16px;top:177px" width="10" height="10"><path d="M4.5 1.6 V7.6 M1.6 4.5 H7.8" stroke="#2a2a2a" stroke-width="1" shape-rendering="crispEdges"/></svg>
<div class="t" style="left:42.39999999999998px;top:176.28px;font-size:10px;line-height:12px;color:#444;transform:scaleX(0.8360);transform-origin:0 50%;">24</div>
<div class="t" style="left:126px;top:176.28px;font-size:10px;line-height:12px;color:#444;transform:scaleX(0.8800);transform-origin:0 50%;">744.727673</div>
<div class="t c" style="left:364.85px;top:176.28px;font-size:10px;line-height:12px;color:#444;transform:translateX(-50%) scaleX(0.8098);transform-origin:50% 50%;">ETH1</div>
<div class="t c" style="left:505.6px;top:176.28px;font-size:10px;line-height:12px;color:#444;transform:translateX(-50%) scaleX(0.7651);transform-origin:50% 50%;">Tx</div>
<div class="t c" style="left:659.7px;top:176.28px;font-size:10px;line-height:12px;color:#444;transform:translateX(-50%) scaleX(0.8846);transform-origin:50% 50%;">UDP报文1</div>
<div class="t c" style="left:814.2px;top:176.28px;font-size:10px;line-height:12px;color:#444;transform:translateX(-50%) scaleX(0.8568);transform-origin:50% 50%;">UDP</div>
<div class="a" style="left:0;top:191.44px;width:1307px;height:1px;background:#e4f4f2"></div>
<div class="a" style="left:16px;top:197px;width:10px;height:10px;border-radius:2.5px;background:#fff"></div>
<svg class="a" style="left:16px;top:197px" width="10" height="10"><path d="M4.5 1.6 V7.6 M1.6 4.5 H7.8" stroke="#2a2a2a" stroke-width="1" shape-rendering="crispEdges"/></svg>
<div class="t" style="left:42.39999999999998px;top:196.74px;font-size:10px;line-height:12px;color:#444;transform:scaleX(0.8360);transform-origin:0 50%;">25</div>
<div class="t" style="left:126px;top:196.74px;font-size:10px;line-height:12px;color:#444;transform:scaleX(0.8800);transform-origin:0 50%;">744.727673</div>
<div class="t c" style="left:364.85px;top:196.74px;font-size:10px;line-height:12px;color:#444;transform:translateX(-50%) scaleX(0.8098);transform-origin:50% 50%;">ETH1</div>
<div class="t c" style="left:505.6px;top:196.74px;font-size:10px;line-height:12px;color:#444;transform:translateX(-50%) scaleX(0.7651);transform-origin:50% 50%;">Tx</div>
<div class="t c" style="left:659.7px;top:196.74px;font-size:10px;line-height:12px;color:#444;transform:translateX(-50%) scaleX(0.8846);transform-origin:50% 50%;">UDP报文1</div>
<div class="t c" style="left:814.2px;top:196.74px;font-size:10px;line-height:12px;color:#444;transform:translateX(-50%) scaleX(0.8568);transform-origin:50% 50%;">UDP</div>
<div class="a" style="left:0;top:211.90px;width:1307px;height:1px;background:#e4f4f2"></div>
<div class="a" style="left:16px;top:218px;width:10px;height:10px;border-radius:2.5px;background:#fff"></div>
<svg class="a" style="left:16px;top:218px" width="10" height="10"><path d="M4.5 1.6 V7.6 M1.6 4.5 H7.8" stroke="#2a2a2a" stroke-width="1" shape-rendering="crispEdges"/></svg>
<div class="t" style="left:42.39999999999998px;top:217.20px;font-size:10px;line-height:12px;color:#444;transform:scaleX(0.8360);transform-origin:0 50%;">26</div>
<div class="t" style="left:126px;top:217.20px;font-size:10px;line-height:12px;color:#444;transform:scaleX(0.8800);transform-origin:0 50%;">744.727673</div>
<div class="t c" style="left:364.85px;top:217.20px;font-size:10px;line-height:12px;color:#444;transform:translateX(-50%) scaleX(0.8098);transform-origin:50% 50%;">ETH1</div>
<div class="t c" style="left:505.6px;top:217.20px;font-size:10px;line-height:12px;color:#444;transform:translateX(-50%) scaleX(0.7651);transform-origin:50% 50%;">Tx</div>
<div class="t c" style="left:659.7px;top:217.20px;font-size:10px;line-height:12px;color:#444;transform:translateX(-50%) scaleX(0.8846);transform-origin:50% 50%;">UDP报文1</div>
<div class="t c" style="left:814.2px;top:217.20px;font-size:10px;line-height:12px;color:#444;transform:translateX(-50%) scaleX(0.8568);transform-origin:50% 50%;">UDP</div>
<div class="a" style="left:0;top:232.36px;width:1307px;height:1px;background:#e4f4f2"></div>
<div class="a" style="left:16px;top:238px;width:10px;height:10px;border-radius:2.5px;background:#fff"></div>
<svg class="a" style="left:16px;top:238px" width="10" height="10"><path d="M4.5 1.6 V7.6 M1.6 4.5 H7.8" stroke="#2a2a2a" stroke-width="1" shape-rendering="crispEdges"/></svg>
<div class="t" style="left:42.39999999999998px;top:237.66px;font-size:10px;line-height:12px;color:#444;transform:scaleX(0.8360);transform-origin:0 50%;">27</div>
<div class="t" style="left:126px;top:237.66px;font-size:10px;line-height:12px;color:#444;transform:scaleX(0.8800);transform-origin:0 50%;">744.727673</div>
<div class="t c" style="left:364.85px;top:237.66px;font-size:10px;line-height:12px;color:#444;transform:translateX(-50%) scaleX(0.8098);transform-origin:50% 50%;">ETH1</div>
<div class="t c" style="left:505.6px;top:237.66px;font-size:10px;line-height:12px;color:#444;transform:translateX(-50%) scaleX(0.7651);transform-origin:50% 50%;">Tx</div>
<div class="t c" style="left:659.7px;top:237.66px;font-size:10px;line-height:12px;color:#444;transform:translateX(-50%) scaleX(0.8846);transform-origin:50% 50%;">UDP报文1</div>
<div class="t c" style="left:814.2px;top:237.66px;font-size:10px;line-height:12px;color:#444;transform:translateX(-50%) scaleX(0.8568);transform-origin:50% 50%;">UDP</div>
<div class="a" style="left:0;top:252.82px;width:1307px;height:1px;background:#e4f4f2"></div>
<div class="a" style="left:16px;top:259px;width:10px;height:10px;border-radius:2.5px;background:#fff"></div>
<svg class="a" style="left:16px;top:259px" width="10" height="10"><path d="M4.5 1.6 V7.6 M1.6 4.5 H7.8" stroke="#2a2a2a" stroke-width="1" shape-rendering="crispEdges"/></svg>
<div class="t" style="left:42.39999999999998px;top:258.12px;font-size:10px;line-height:12px;color:#444;transform:scaleX(0.8360);transform-origin:0 50%;">28</div>
<div class="t" style="left:126px;top:258.12px;font-size:10px;line-height:12px;color:#444;transform:scaleX(0.8800);transform-origin:0 50%;">744.727673</div>
<div class="t c" style="left:364.85px;top:258.12px;font-size:10px;line-height:12px;color:#444;transform:translateX(-50%) scaleX(0.8098);transform-origin:50% 50%;">ETH1</div>
<div class="t c" style="left:505.6px;top:258.12px;font-size:10px;line-height:12px;color:#444;transform:translateX(-50%) scaleX(0.7651);transform-origin:50% 50%;">Tx</div>
<div class="t c" style="left:659.7px;top:258.12px;font-size:10px;line-height:12px;color:#444;transform:translateX(-50%) scaleX(0.8846);transform-origin:50% 50%;">UDP报文1</div>
<div class="t c" style="left:814.2px;top:258.12px;font-size:10px;line-height:12px;color:#444;transform:translateX(-50%) scaleX(0.8568);transform-origin:50% 50%;">UDP</div>
<div class="a" style="left:0;top:273.28px;width:1307px;height:1px;background:#e4f4f2"></div>
<div class="a" style="left:16px;top:279px;width:10px;height:10px;border-radius:2.5px;background:#fff"></div>
<svg class="a" style="left:16px;top:279px" width="10" height="10"><path d="M4.5 1.6 V7.6 M1.6 4.5 H7.8" stroke="#2a2a2a" stroke-width="1" shape-rendering="crispEdges"/></svg>
<div class="t" style="left:42.39999999999998px;top:278.58px;font-size:10px;line-height:12px;color:#444;transform:scaleX(0.8360);transform-origin:0 50%;">29</div>
<div class="t" style="left:126px;top:278.58px;font-size:10px;line-height:12px;color:#444;transform:scaleX(0.8800);transform-origin:0 50%;">744.727673</div>
<div class="t c" style="left:364.85px;top:278.58px;font-size:10px;line-height:12px;color:#444;transform:translateX(-50%) scaleX(0.8098);transform-origin:50% 50%;">ETH1</div>
<div class="t c" style="left:505.6px;top:278.58px;font-size:10px;line-height:12px;color:#444;transform:translateX(-50%) scaleX(0.7651);transform-origin:50% 50%;">Tx</div>
<div class="t c" style="left:659.7px;top:278.58px;font-size:10px;line-height:12px;color:#444;transform:translateX(-50%) scaleX(0.8846);transform-origin:50% 50%;">UDP报文1</div>
<div class="t c" style="left:814.2px;top:278.58px;font-size:10px;line-height:12px;color:#444;transform:translateX(-50%) scaleX(0.8568);transform-origin:50% 50%;">UDP</div>
<div class="a" style="left:0;top:293.74px;width:1307px;height:1px;background:#e4f4f2"></div>
<div class="a" style="left:16px;top:300px;width:10px;height:10px;border-radius:2.5px;background:#fff"></div>
<svg class="a" style="left:16px;top:300px" width="10" height="10"><path d="M4.5 1.6 V7.6 M1.6 4.5 H7.8" stroke="#2a2a2a" stroke-width="1" shape-rendering="crispEdges"/></svg>
<div class="t" style="left:42.39999999999998px;top:299.04px;font-size:10px;line-height:12px;color:#444;transform:scaleX(0.8360);transform-origin:0 50%;">30</div>
<div class="t" style="left:126px;top:299.04px;font-size:10px;line-height:12px;color:#444;transform:scaleX(0.8800);transform-origin:0 50%;">744.727673</div>
<div class="t c" style="left:364.85px;top:299.04px;font-size:10px;line-height:12px;color:#444;transform:translateX(-50%) scaleX(0.8098);transform-origin:50% 50%;">ETH1</div>
<div class="t c" style="left:505.6px;top:299.04px;font-size:10px;line-height:12px;color:#444;transform:translateX(-50%) scaleX(0.7651);transform-origin:50% 50%;">Tx</div>
<div class="t c" style="left:659.7px;top:299.04px;font-size:10px;line-height:12px;color:#444;transform:translateX(-50%) scaleX(0.8846);transform-origin:50% 50%;">UDP报文1</div>
<div class="t c" style="left:814.2px;top:299.04px;font-size:10px;line-height:12px;color:#444;transform:translateX(-50%) scaleX(0.8568);transform-origin:50% 50%;">UDP</div>
<div class="a" style="left:0;top:314.20px;width:1307px;height:1px;background:#e4f4f2"></div>
<div class="a" style="left:16px;top:320px;width:10px;height:10px;border-radius:2.5px;background:#fff"></div>
<svg class="a" style="left:16px;top:320px" width="10" height="10"><path d="M4.5 1.6 V7.6 M1.6 4.5 H7.8" stroke="#2a2a2a" stroke-width="1" shape-rendering="crispEdges"/></svg>
<div class="t" style="left:42.39999999999998px;top:319.50px;font-size:10px;line-height:12px;color:#444;transform:scaleX(0.8360);transform-origin:0 50%;">31</div>
<div class="t" style="left:126px;top:319.50px;font-size:10px;line-height:12px;color:#444;transform:scaleX(0.8800);transform-origin:0 50%;">744.727673</div>
<div class="t c" style="left:364.85px;top:319.50px;font-size:10px;line-height:12px;color:#444;transform:translateX(-50%) scaleX(0.8098);transform-origin:50% 50%;">ETH1</div>
<div class="t c" style="left:505.6px;top:319.50px;font-size:10px;line-height:12px;color:#444;transform:translateX(-50%) scaleX(0.7651);transform-origin:50% 50%;">Tx</div>
<div class="t c" style="left:659.7px;top:319.50px;font-size:10px;line-height:12px;color:#444;transform:translateX(-50%) scaleX(0.8846);transform-origin:50% 50%;">UDP报文1</div>
<div class="t c" style="left:814.2px;top:319.50px;font-size:10px;line-height:12px;color:#444;transform:translateX(-50%) scaleX(0.8568);transform-origin:50% 50%;">UDP</div>
</div>
<div class="a" style="left:1652px;top:185px;width:4px;height:325px;background:#e8e8e8;"></div>
<div class="a" style="left:1652px;top:226px;width:4px;height:44px;background:#c4c4c4;border-radius:2px"></div>
<div class="a" style="left:0px;top:510px;width:1656px;height:1px;background:#e6e6e6;"></div>
<div class="a" style="left:0px;top:511px;width:38px;height:232px;background:#f8f9fd;"></div>
<div class="a" style="left:250.5px;top:557px;width:148px;height:19px;background:#b9d1f6;"></div>
<div class="a" style="left:45px;top:576.5px;width:269px;height:19px;background:#b9d1f6;"></div>
<div class="a" style="left:591px;top:557px;width:26px;height:19px;background:#b9d1f6;"></div>
<div class="a" style="left:550px;top:576.5px;width:39.5px;height:19px;background:#b9d1f6;"></div>
<div class="t" style="left:7.6px;top:521.80px;font-size:10.2px;line-height:12px;color:#444;transform:scaleX(0.8954);transform-origin:0 50%;">0000</div>
<div class="t c" style="left:55.2px;top:521.80px;font-size:10.2px;line-height:12px;color:#4a4a4a;transform:translateX(-50%) scaleX(0.9344);transform-origin:50% 50%;">aa</div>
<div class="t c" style="left:76.30000000000001px;top:521.80px;font-size:10.2px;line-height:12px;color:#4a4a4a;transform:translateX(-50%) scaleX(0.9344);transform-origin:50% 50%;">bb</div>
<div class="t c" style="left:97.4px;top:521.80px;font-size:10.2px;line-height:12px;color:#4a4a4a;transform:translateX(-50%) scaleX(1.0405);transform-origin:50% 50%;">cc</div>
<div class="t c" style="left:118.5px;top:521.80px;font-size:10.2px;line-height:12px;color:#4a4a4a;transform:translateX(-50%) scaleX(0.9344);transform-origin:50% 50%;">dd</div>
<div class="t c" style="left:139.60000000000002px;top:521.80px;font-size:10.2px;line-height:12px;color:#4a4a4a;transform:translateX(-50%) scaleX(0.9344);transform-origin:50% 50%;">ee</div>
<div class="t c" style="left:160.7px;top:521.80px;font-size:10.2px;line-height:12px;color:#4a4a4a;transform:translateX(-50%) scaleX(0.9344);transform-origin:50% 50%;">01</div>
<div class="t c" style="left:181.8px;top:521.80px;font-size:10.2px;line-height:12px;color:#4a4a4a;transform:translateX(-50%) scaleX(0.9344);transform-origin:50% 50%;">aa</div>
<div class="t c" style="left:202.90000000000003px;top:521.80px;font-size:10.2px;line-height:12px;color:#4a4a4a;transform:translateX(-50%) scaleX(0.9344);transform-origin:50% 50%;">bb</div>
<div class="t c" style="left:238.5px;top:521.80px;font-size:10.2px;line-height:12px;color:#4a4a4a;transform:translateX(-50%) scaleX(1.0405);transform-origin:50% 50%;">cc</div>
<div class="t c" style="left:259.6px;top:521.80px;font-size:10.2px;line-height:12px;color:#4a4a4a;transform:translateX(-50%) scaleX(0.9344);transform-origin:50% 50%;">dd</div>
<div class="t c" style="left:280.7px;top:521.80px;font-size:10.2px;line-height:12px;color:#4a4a4a;transform:translateX(-50%) scaleX(0.9344);transform-origin:50% 50%;">ee</div>
<div class="t c" style="left:301.8px;top:521.80px;font-size:10.2px;line-height:12px;color:#4a4a4a;transform:translateX(-50%) scaleX(0.9344);transform-origin:50% 50%;">01</div>
<div class="t c" style="left:322.90000000000003px;top:521.80px;font-size:10.2px;line-height:12px;color:#4a4a4a;transform:translateX(-50%) scaleX(0.9344);transform-origin:50% 50%;">08</div>
<div class="t c" style="left:344.0px;top:521.80px;font-size:10.2px;line-height:12px;color:#4a4a4a;transform:translateX(-50%) scaleX(0.9344);transform-origin:50% 50%;">00</div>
<div class="t c" style="left:365.1px;top:521.80px;font-size:10.2px;line-height:12px;color:#4a4a4a;transform:translateX(-50%) scaleX(0.9344);transform-origin:50% 50%;">45</div>
<div class="t c" style="left:386.2px;top:521.80px;font-size:10.2px;line-height:12px;color:#4a4a4a;transform:translateX(-50%) scaleX(0.9344);transform-origin:50% 50%;">00</div>
<div class="t" style="left:550.4px;top:521.80px;font-size:9.6px;line-height:12px;color:#555;letter-spacing:0.7px;transform:scaleX(0.9723);transform-origin:0 50%;">..............E.</div>
<div class="t" style="left:7.6px;top:541.55px;font-size:10.2px;line-height:12px;color:#444;transform:scaleX(0.8954);transform-origin:0 50%;">0010</div>
<div class="t c" style="left:55.2px;top:541.55px;font-size:10.2px;line-height:12px;color:#4a4a4a;transform:translateX(-50%) scaleX(0.9344);transform-origin:50% 50%;">00</div>
<div class="t c" style="left:76.30000000000001px;top:541.55px;font-size:10.2px;line-height:12px;color:#4a4a4a;transform:translateX(-50%) scaleX(0.9344);transform-origin:50% 50%;">2e</div>
<div class="t c" style="left:97.4px;top:541.55px;font-size:10.2px;line-height:12px;color:#4a4a4a;transform:translateX(-50%) scaleX(0.9344);transform-origin:50% 50%;">00</div>
<div class="t c" style="left:118.5px;top:541.55px;font-size:10.2px;line-height:12px;color:#4a4a4a;transform:translateX(-50%) scaleX(0.9344);transform-origin:50% 50%;">18</div>
<div class="t c" style="left:139.60000000000002px;top:541.55px;font-size:10.2px;line-height:12px;color:#4a4a4a;transform:translateX(-50%) scaleX(0.9344);transform-origin:50% 50%;">00</div>
<div class="t c" style="left:160.7px;top:541.55px;font-size:10.2px;line-height:12px;color:#4a4a4a;transform:translateX(-50%) scaleX(0.9344);transform-origin:50% 50%;">00</div>
<div class="t c" style="left:181.8px;top:541.55px;font-size:10.2px;line-height:12px;color:#4a4a4a;transform:translateX(-50%) scaleX(0.9344);transform-origin:50% 50%;">80</div>
<div class="t c" style="left:202.90000000000003px;top:541.55px;font-size:10.2px;line-height:12px;color:#4a4a4a;transform:translateX(-50%) scaleX(1.0021);transform-origin:50% 50%;">11</div>
<div class="t c" style="left:238.5px;top:541.55px;font-size:10.2px;line-height:12px;color:#4a4a4a;transform:translateX(-50%) scaleX(0.9846);transform-origin:50% 50%;">dc</div>
<div class="t c" style="left:259.6px;top:541.55px;font-size:10.2px;line-height:12px;color:#4a4a4a;transform:translateX(-50%) scaleX(0.9344);transform-origin:50% 50%;">70</div>
<div class="t c" style="left:280.7px;top:541.55px;font-size:10.2px;line-height:12px;color:#4a4a4a;transform:translateX(-50%) scaleX(0.9846);transform-origin:50% 50%;">ac</div>
<div class="t c" style="left:301.8px;top:541.55px;font-size:10.2px;line-height:12px;color:#4a4a4a;transform:translateX(-50%) scaleX(0.9344);transform-origin:50% 50%;">14</div>
<div class="t c" style="left:322.90000000000003px;top:541.55px;font-size:10.2px;line-height:12px;color:#4a4a4a;transform:translateX(-50%) scaleX(0.9344);transform-origin:50% 50%;">03</div>
<div class="t c" style="left:344.0px;top:541.55px;font-size:10.2px;line-height:12px;color:#4a4a4a;transform:translateX(-50%) scaleX(0.9344);transform-origin:50% 50%;">06</div>
<div class="t c" style="left:365.1px;top:541.55px;font-size:10.2px;line-height:12px;color:#4a4a4a;transform:translateX(-50%) scaleX(0.9846);transform-origin:50% 50%;">ac</div>
<div class="t c" style="left:386.2px;top:541.55px;font-size:10.2px;line-height:12px;color:#4a4a4a;transform:translateX(-50%) scaleX(0.9344);transform-origin:50% 50%;">14</div>
<div class="t" style="left:550.4px;top:541.55px;font-size:9.6px;line-height:12px;color:#555;letter-spacing:0.7px;transform:scaleX(0.9906);transform-origin:0 50%;">.........p......</div>
<div class="t" style="left:7.6px;top:561.30px;font-size:10.2px;line-height:12px;color:#444;transform:scaleX(0.8954);transform-origin:0 50%;">0020</div>
<div class="t c" style="left:55.2px;top:561.30px;font-size:10.2px;line-height:12px;color:#4a4a4a;transform:translateX(-50%) scaleX(0.9344);transform-origin:50% 50%;">03</div>
<div class="t c" style="left:76.30000000000001px;top:561.30px;font-size:10.2px;line-height:12px;color:#4a4a4a;transform:translateX(-50%) scaleX(0.9344);transform-origin:50% 50%;">08</div>
<div class="t c" style="left:97.4px;top:561.30px;font-size:10.2px;line-height:12px;color:#4a4a4a;transform:translateX(-50%) scaleX(0.9344);transform-origin:50% 50%;">76</div>
<div class="t c" style="left:118.5px;top:561.30px;font-size:10.2px;line-height:12px;color:#4a4a4a;transform:translateX(-50%) scaleX(0.9846);transform-origin:50% 50%;">c5</div>
<div class="t c" style="left:139.60000000000002px;top:561.30px;font-size:10.2px;line-height:12px;color:#4a4a4a;transform:translateX(-50%) scaleX(0.9344);transform-origin:50% 50%;">77</div>
<div class="t c" style="left:160.7px;top:561.30px;font-size:10.2px;line-height:12px;color:#4a4a4a;transform:translateX(-50%) scaleX(0.9344);transform-origin:50% 50%;">2b</div>
<div class="t c" style="left:181.8px;top:561.30px;font-size:10.2px;line-height:12px;color:#4a4a4a;transform:translateX(-50%) scaleX(0.9344);transform-origin:50% 50%;">00</div>
<div class="t c" style="left:202.90000000000003px;top:561.30px;font-size:10.2px;line-height:12px;color:#4a4a4a;transform:translateX(-50%) scaleX(0.9344);transform-origin:50% 50%;">1a</div>
<div class="t c" style="left:238.5px;top:561.30px;font-size:10.2px;line-height:12px;color:#4a4a4a;transform:translateX(-50%) scaleX(0.9344);transform-origin:50% 50%;">de</div>
<div class="t c" style="left:259.6px;top:561.30px;font-size:10.2px;line-height:12px;color:#4a4a4a;transform:translateX(-50%) scaleX(0.9344);transform-origin:50% 50%;">85</div>
<div class="t c" style="left:280.7px;top:561.30px;font-size:10.2px;line-height:12px;color:#4a4a4a;transform:translateX(-50%) scaleX(0.9344);transform-origin:50% 50%;">45</div>
<div class="t c" style="left:301.8px;top:561.30px;font-size:10.2px;line-height:12px;color:#4a4a4a;transform:translateX(-50%) scaleX(0.9344);transform-origin:50% 50%;">02</div>
<div class="t c" style="left:322.90000000000003px;top:561.30px;font-size:10.2px;line-height:12px;color:#4a4a4a;transform:translateX(-50%) scaleX(0.9344);transform-origin:50% 50%;">90</div>
<div class="t c" style="left:344.0px;top:561.30px;font-size:10.2px;line-height:12px;color:#4a4a4a;transform:translateX(-50%) scaleX(0.9344);transform-origin:50% 50%;">01</div>
<div class="t c" style="left:365.1px;top:561.30px;font-size:10.2px;line-height:12px;color:#4a4a4a;transform:translateX(-50%) scaleX(0.9344);transform-origin:50% 50%;">00</div>
<div class="t c" style="left:386.2px;top:561.30px;font-size:10.2px;line-height:12px;color:#4a4a4a;transform:translateX(-50%) scaleX(0.9344);transform-origin:50% 50%;">00</div>
<div class="t" style="left:550.4px;top:561.30px;font-size:9.6px;line-height:12px;color:#555;letter-spacing:0.7px;transform:scaleX(1.0120);transform-origin:0 50%;">..v.w+....E.....</div>
<div class="t" style="left:7.6px;top:581.05px;font-size:10.2px;line-height:12px;color:#444;transform:scaleX(0.8954);transform-origin:0 50%;">0030</div>
<div class="t c" style="left:55.2px;top:581.05px;font-size:10.2px;line-height:12px;color:#4a4a4a;transform:translateX(-50%) scaleX(0.9344);transform-origin:50% 50%;">00</div>
<div class="t c" style="left:76.30000000000001px;top:581.05px;font-size:10.2px;line-height:12px;color:#4a4a4a;transform:translateX(-50%) scaleX(0.9344);transform-origin:50% 50%;">09</div>
<div class="t c" style="left:97.4px;top:581.05px;font-size:10.2px;line-height:12px;color:#4a4a4a;transform:translateX(-50%) scaleX(0.9344);transform-origin:50% 50%;">00</div>
<div class="t c" style="left:118.5px;top:581.05px;font-size:10.2px;line-height:12px;color:#4a4a4a;transform:translateX(-50%) scaleX(0.9344);transform-origin:50% 50%;">00</div>
<div class="t c" style="left:139.60000000000002px;top:581.05px;font-size:10.2px;line-height:12px;color:#4a4a4a;transform:translateX(-50%) scaleX(0.9344);transform-origin:50% 50%;">00</div>
<div class="t c" style="left:160.7px;top:581.05px;font-size:10.2px;line-height:12px;color:#4a4a4a;transform:translateX(-50%) scaleX(0.9344);transform-origin:50% 50%;">00</div>
<div class="t c" style="left:181.8px;top:581.05px;font-size:10.2px;line-height:12px;color:#4a4a4a;transform:translateX(-50%) scaleX(0.9344);transform-origin:50% 50%;">00</div>
<div class="t c" style="left:202.90000000000003px;top:581.05px;font-size:10.2px;line-height:12px;color:#4a4a4a;transform:translateX(-50%) scaleX(0.9344);transform-origin:50% 50%;">00</div>
<div class="t c" style="left:238.5px;top:581.05px;font-size:10.2px;line-height:12px;color:#4a4a4a;transform:translateX(-50%) scaleX(0.9344);transform-origin:50% 50%;">00</div>
<div class="t c" style="left:259.6px;top:581.05px;font-size:10.2px;line-height:12px;color:#4a4a4a;transform:translateX(-50%) scaleX(0.9344);transform-origin:50% 50%;">00</div>
<div class="t c" style="left:280.7px;top:581.05px;font-size:10.2px;line-height:12px;color:#4a4a4a;transform:translateX(-50%) scaleX(0.9344);transform-origin:50% 50%;">00</div>
<div class="t c" style="left:301.8px;top:581.05px;font-size:10.2px;line-height:12px;color:#4a4a4a;transform:translateX(-50%) scaleX(0.9344);transform-origin:50% 50%;">00</div>
<div class="t" style="left:550.4px;top:581.05px;font-size:9.6px;line-height:12px;color:#555;letter-spacing:0.7px;transform:scaleX(1.0027);transform-origin:0 50%;">............</div>
<div class="a" style="left:0px;top:743px;width:1656px;height:23px;background:#f0f1f3;"></div>
<div class="a" style="left:0px;top:766px;width:1656px;height:1px;background:#dcdde0;"></div>
<div class="t" style="left:15.4px;top:749.30px;font-size:9.2px;line-height:12px;color:#333;transform:scaleX(1.0056);transform-origin:0 50%;">系统信息</div>
<div class="a" style="left:1440px;top:747px;width:111px;height:16.5px;background:#fff;border:1px solid #dfe0e3;border-radius:1px"></div>
<svg class="a" style="left:1444px;top:750px" width="10" height="10" viewBox="0 0 10 10"><circle cx="4" cy="4" r="2.9" fill="none" stroke="#555" stroke-width="1.1"/><path d="M6 6 L8.8 8.8" stroke="#555" stroke-width="1.3"/></svg>
<div class="t" style="left:1457px;top:749.30px;font-size:9px;line-height:12px;color:#c0c0c0;transform:scaleX(1.0111);transform-origin:0 50%;">搜索</div>
<div class="a" style="left:1557.5px;top:747px;width:39px;height:16px;background:#fff;border:1px solid #dfe0e3;border-radius:1px"></div>
<div class="t c" style="left:1576.75px;top:749.30px;font-size:9.3px;line-height:12px;color:#333;transform:translateX(-50%) scaleX(0.9954);transform-origin:50% 50%;">清 空</div>
<div class="a" style="left:1603px;top:747px;width:39px;height:16px;background:#fff;border:1px solid #dfe0e3;border-radius:1px"></div>
<div class="t c" style="left:1622.25px;top:749.30px;font-size:9.3px;line-height:12px;color:#333;transform:translateX(-50%) scaleX(1.0197);transform-origin:50% 50%;">导 出</div>
<div class="a" style="left:0px;top:767px;width:1656px;height:20px;background:#fff;"></div>
<div class="t" style="left:10px;top:771.20px;font-size:9.2px;line-height:12px;color:#3d87f2;transform:scaleX(1.0000);transform-origin:0 50%;">全部</div>
<div class="t" style="left:49.3px;top:771.20px;font-size:9.2px;line-height:12px;color:#444;transform:scaleX(1.0056);transform-origin:0 50%;">提示信息</div>
<div class="t" style="left:107px;top:771.20px;font-size:9.2px;line-height:12px;color:#444;transform:scaleX(1.0139);transform-origin:0 50%;">成功信息</div>
<div class="t" style="left:165px;top:771.20px;font-size:9.2px;line-height:12px;color:#444;transform:scaleX(1.0000);transform-origin:0 50%;">错误信息</div>
<div class="t" style="left:223px;top:771.20px;font-size:9.2px;line-height:12px;color:#444;transform:scaleX(1.0278);transform-origin:0 50%;">调试信息</div>
<div class="a" style="left:0;top:786.5px;width:1651px;height:109.5px;overflow:hidden">
<div class="t" style="left:12px;top:-7.00px;font-size:10px;line-height:12px;color:#f05050;transform:scaleX(0.8948);transform-origin:0 50%;">2024-03-01 17:00:19:185 [数据管理-流量解析] [错误信息] [object Object]流量文件解析:./uploads/ETH_log_2024_3_1_16_46_6.pcapng不合法!</div>
<div class="t" style="left:12px;top:5.10px;font-size:10px;line-height:12px;color:#f05050;transform:scaleX(0.8976);transform-origin:0 50%;">2024-03-01 17:00:19:185 [网络连接] [错误信息] 流量文件解析:./uploads/ETH_log_2024_3_1_16_46_6.pcapng不合法!</div>
<div class="t" style="left:12px;top:18.30px;font-size:10px;line-height:12px;color:#f05050;transform:scaleX(0.8976);transform-origin:0 50%;">2024-03-01 17:00:19:185 [网络连接] [错误信息] 流量文件解析:./uploads/ETH_log_2024_3_1_16_46_6.pcapng不合法!</div>
<div class="t" style="left:12px;top:31.50px;font-size:10px;line-height:12px;color:#f05050;transform:scaleX(0.8977);transform-origin:0 50%;">2024-03-01 17:00:19:186 [流量解析] [错误信息] 解析D:\workspace\BlitzFuzz\ProjectFiles\ETH_log_2024_3_1_16_46_6.pcapng失败[object Object]</div>
<div class="t" style="left:12px;top:44.70px;font-size:10px;line-height:12px;color:#f05050;transform:scaleX(0.8977);transform-origin:0 50%;">2024-03-01 17:00:19:186 [流量解析] [错误信息] 解析D:\workspace\BlitzFuzz\ProjectFiles\ETH_log_2024_3_1_16_46_6.pcapng失败[object Object]</div>
<div class="t" style="left:12px;top:57.90px;font-size:10px;line-height:12px;color:#333;transform:scaleX(0.8994);transform-origin:0 50%;">2024-03-01 17:00:29:613 [数据管理-流量解析] [调试信息] 流量文件解析:./uploads/ETH_log_2024_2_1_10_42_59.pcapng解析开始!</div>
<div class="t" style="left:12px;top:71.10px;font-size:10px;line-height:12px;color:#333;transform:scaleX(0.8994);transform-origin:0 50%;">2024-03-01 17:00:29:613 [数据管理-流量解析] [调试信息] 流量文件解析:./uploads/ETH_log_2024_2_1_10_42_59.pcapng解析开始!</div>
<div class="t" style="left:12px;top:84.30px;font-size:10px;line-height:12px;color:#3aaa78;transform:scaleX(0.8941);transform-origin:0 50%;">2024-03-01 17:00:29:535 [流量解析] [成功信息] 已开始解析文件D:\workspace\BlitzFuzz\ProjectFiles\ETH_log_2024_2_1_10_42_59.pcapng</div>
<div class="t" style="left:12px;top:97.50px;font-size:10px;line-height:12px;color:#3aaa78;transform:scaleX(0.8941);transform-origin:0 50%;">2024-03-01 17:00:29:535 [流量解析] [成功信息] 已开始解析文件D:\workspace\BlitzFuzz\ProjectFiles\ETH_log_2024_2_1_10_42_59.pcapng</div>
</div>
<div class="a" style="left:9.5px;top:786px;width:18.5px;height:1.5px;background:#3d87f2;"></div>
<div class="a" style="left:1651.5px;top:787px;width:4.5px;height:109px;background:#e8e8e8;border-radius:2px"></div>
<div class="a" style="left:1651.5px;top:878px;width:4.5px;height:18px;background:#c4c4c4;border-radius:2px"></div>
<div class="a" style="left:0px;top:896px;width:1656px;height:24px;background:#f0f1f3;"></div>
<div class="a" style="left:0px;top:896px;width:1656px;height:1.5px;background:#e3e4e6;"></div>
<div class="a" style="left:0px;top:920px;width:1656px;height:1.2px;background:#3c3c3c;"></div>
<div class="t" style="left:15px;top:903.10px;font-size:10px;line-height:12px;color:#333;transform:scaleX(0.9099);transform-origin:0 50%;">当前Project：Project1</div>
<div class="a" style="left:120px;top:902px;width:1px;height:14px;background:#d8d8d8;"></div>
<div class="t" style="left:143px;top:903.10px;font-size:10px;line-height:12px;color:#333;transform:scaleX(0.9300);transform-origin:0 50%;">连接状态：已连接</div>
<div class="a" style="left:232.5px;top:902px;width:1px;height:14px;background:#d8d8d8;"></div>
<div class="t" style="left:255.6px;top:903.10px;font-size:10px;line-height:12px;color:#333;transform:scaleX(0.8280);transform-origin:0 50%;">存储状态：</div>
<div class="a" style="left:318px;top:902px;width:1px;height:14px;background:#d8d8d8;"></div>
<div class="t" style="left:340.6px;top:903.10px;font-size:10px;line-height:12px;color:#333;transform:scaleX(0.8982);transform-origin:0 50%;">最新一条系统信息：2024-03-01 17:00:29:535 [流量解析] [成功信息] 已开始解析文件D:\workspace\BlitzFuzz\ProjectFiles\ETH_log_2024_2_1_10_42_59.pcapng</div>
<div class="a" style="left:993.5px;top:902px;width:1px;height:14px;background:#d8d8d8;"></div>
</body></html>
